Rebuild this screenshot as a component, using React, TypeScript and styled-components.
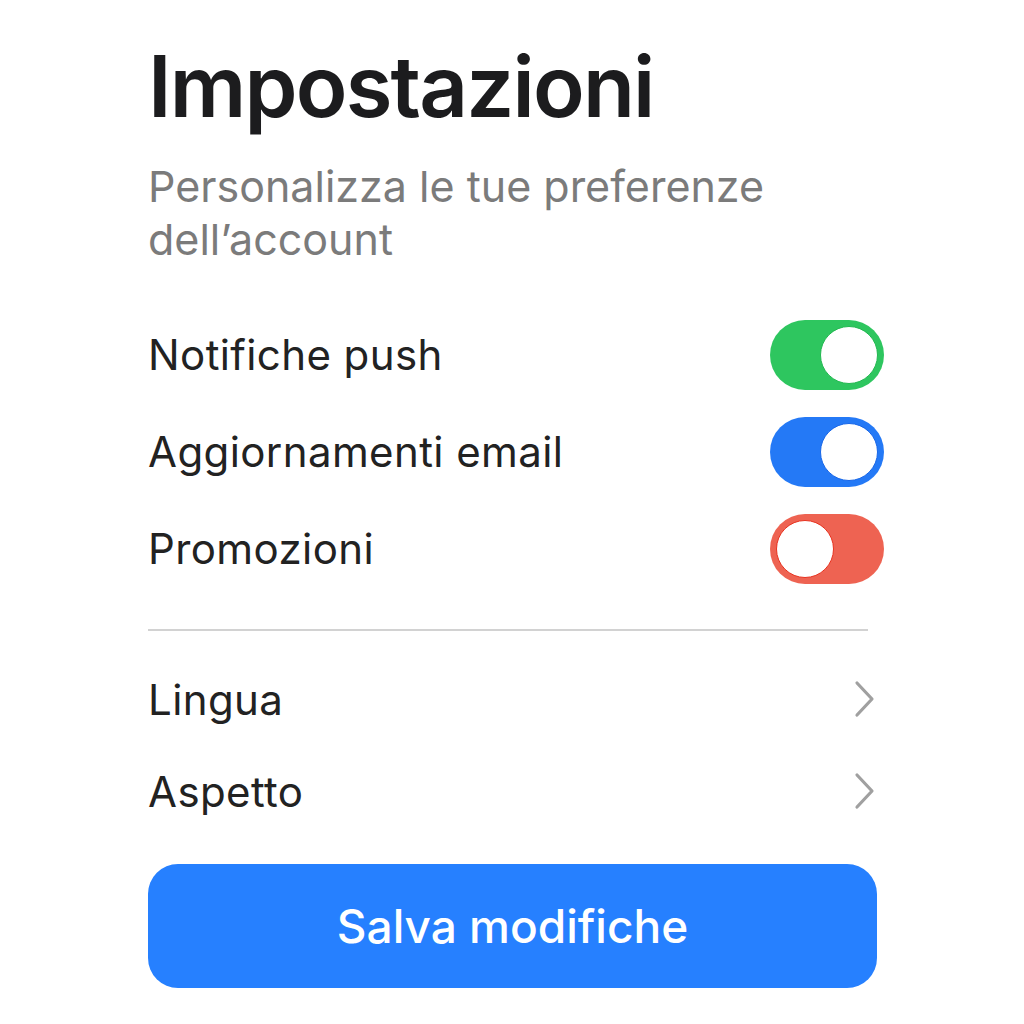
import React from "react";
import styled, { createGlobalStyle } from "styled-components";

const Global = createGlobalStyle`
  html, body { margin: 0; padding: 0; background: #ffffff; }
  body { font-family: Inter, "Noto Sans", "Liberation Sans", sans-serif; }
`;

const Page = styled.div`
  width: 1024px;
  height: 1024px;
  box-sizing: border-box;
  padding: 34px 140px 0 148px;
  display: flex;
  flex-direction: column;
`;

const Title = styled.h1`
  margin: 0;
  font-size: 85px;
  font-weight: 600;
  letter-spacing: -1.8px;
  line-height: 106px;
  color: #1c1c1e;
`;

const Subtitle = styled.p`
  margin: 20px 0 0;
  font-size: 43px;
  line-height: 53px;
  font-weight: 400;
  color: #7b7b7b;
  max-width: 680px;
`;

const List = styled.div`
  display: flex;
  flex-direction: column;
  margin-top: 40px;
`;

const Row = styled.div<{ $h: number }>`
  display: flex;
  align-items: center;
  justify-content: space-between;
  height: ${(p) => p.$h}px;
`;

const Label = styled.span`
  font-size: 42px;
  font-weight: 400;
  color: #222;
  letter-spacing: 0.4px;
`;

const Track = styled.div<{ $color: string; $on: boolean }>`
  width: 114px;
  height: 70px;
  border-radius: 35px;
  background: ${(p) => p.$color};
  display: flex;
  align-items: center;
  justify-content: ${(p) => (p.$on ? "flex-end" : "flex-start")};
  padding: 0 6px;
  box-sizing: border-box;
`;

const Knob = styled.div<{ $color: string }>`
  width: 58px;
  height: 58px;
  border-radius: 50%;
  background: #fff;
  box-sizing: border-box;
  border: 1.5px solid ${(p) => p.$color};
`;

const Divider = styled.hr`
  border: none;
  height: 2px;
  background: #d2d2d2;
  margin: 32px 16px 22px 0;
`;

const Chevron = styled.svg`
  width: 26px;
  height: 40px;
  margin-right: 6px;
`;

const Button = styled.button`
  margin-top: 27px;
  width: 729px;
  height: 124px;
  border: none;
  border-radius: 30px;
  background: #2680ff;
  color: #fff;
  font-family: inherit;
  font-size: 46px;
  font-weight: 500;
  letter-spacing: 0px;
`;

const toggles = [
  { label: "Notifiche push", color: "#2ec65f", knob: "#22b850", on: true },
  { label: "Aggiornamenti email", color: "#2479f6", knob: "#1766e8", on: true },
  { label: "Promozioni", color: "#ee6352", knob: "#e8321f", on: false },
];

const ChevronIcon = () => (
  <Chevron viewBox="0 0 26 40">
    <path d="M5 4 L20 20 L5 36" fill="none" stroke="#a0a0a0" strokeWidth="3.2" strokeLinecap="round" strokeLinejoin="round" />
  </Chevron>
);

export default function App() {
  return (
    <>
      <Global />
      <Page>
        <Title>Impostazioni</Title>
        <Subtitle>Personalizza le tue preferenze dell’account</Subtitle>
        <List>
          {toggles.map((t) => (
            <Row key={t.label} $h={97}>
              <Label>{t.label}</Label>
              <Track $color={t.color} $on={t.on}>
                <Knob $color={t.knob} />
              </Track>
            </Row>
          ))}
        </List>
        <Divider />
        <Row $h={92}>
          <Label>Lingua</Label>
          <ChevronIcon />
        </Row>
        <Row $h={92}>
          <Label>Aspetto</Label>
          <ChevronIcon />
        </Row>
        <Button>Salva modifiche</Button>
      </Page>
    </>
  );
}
